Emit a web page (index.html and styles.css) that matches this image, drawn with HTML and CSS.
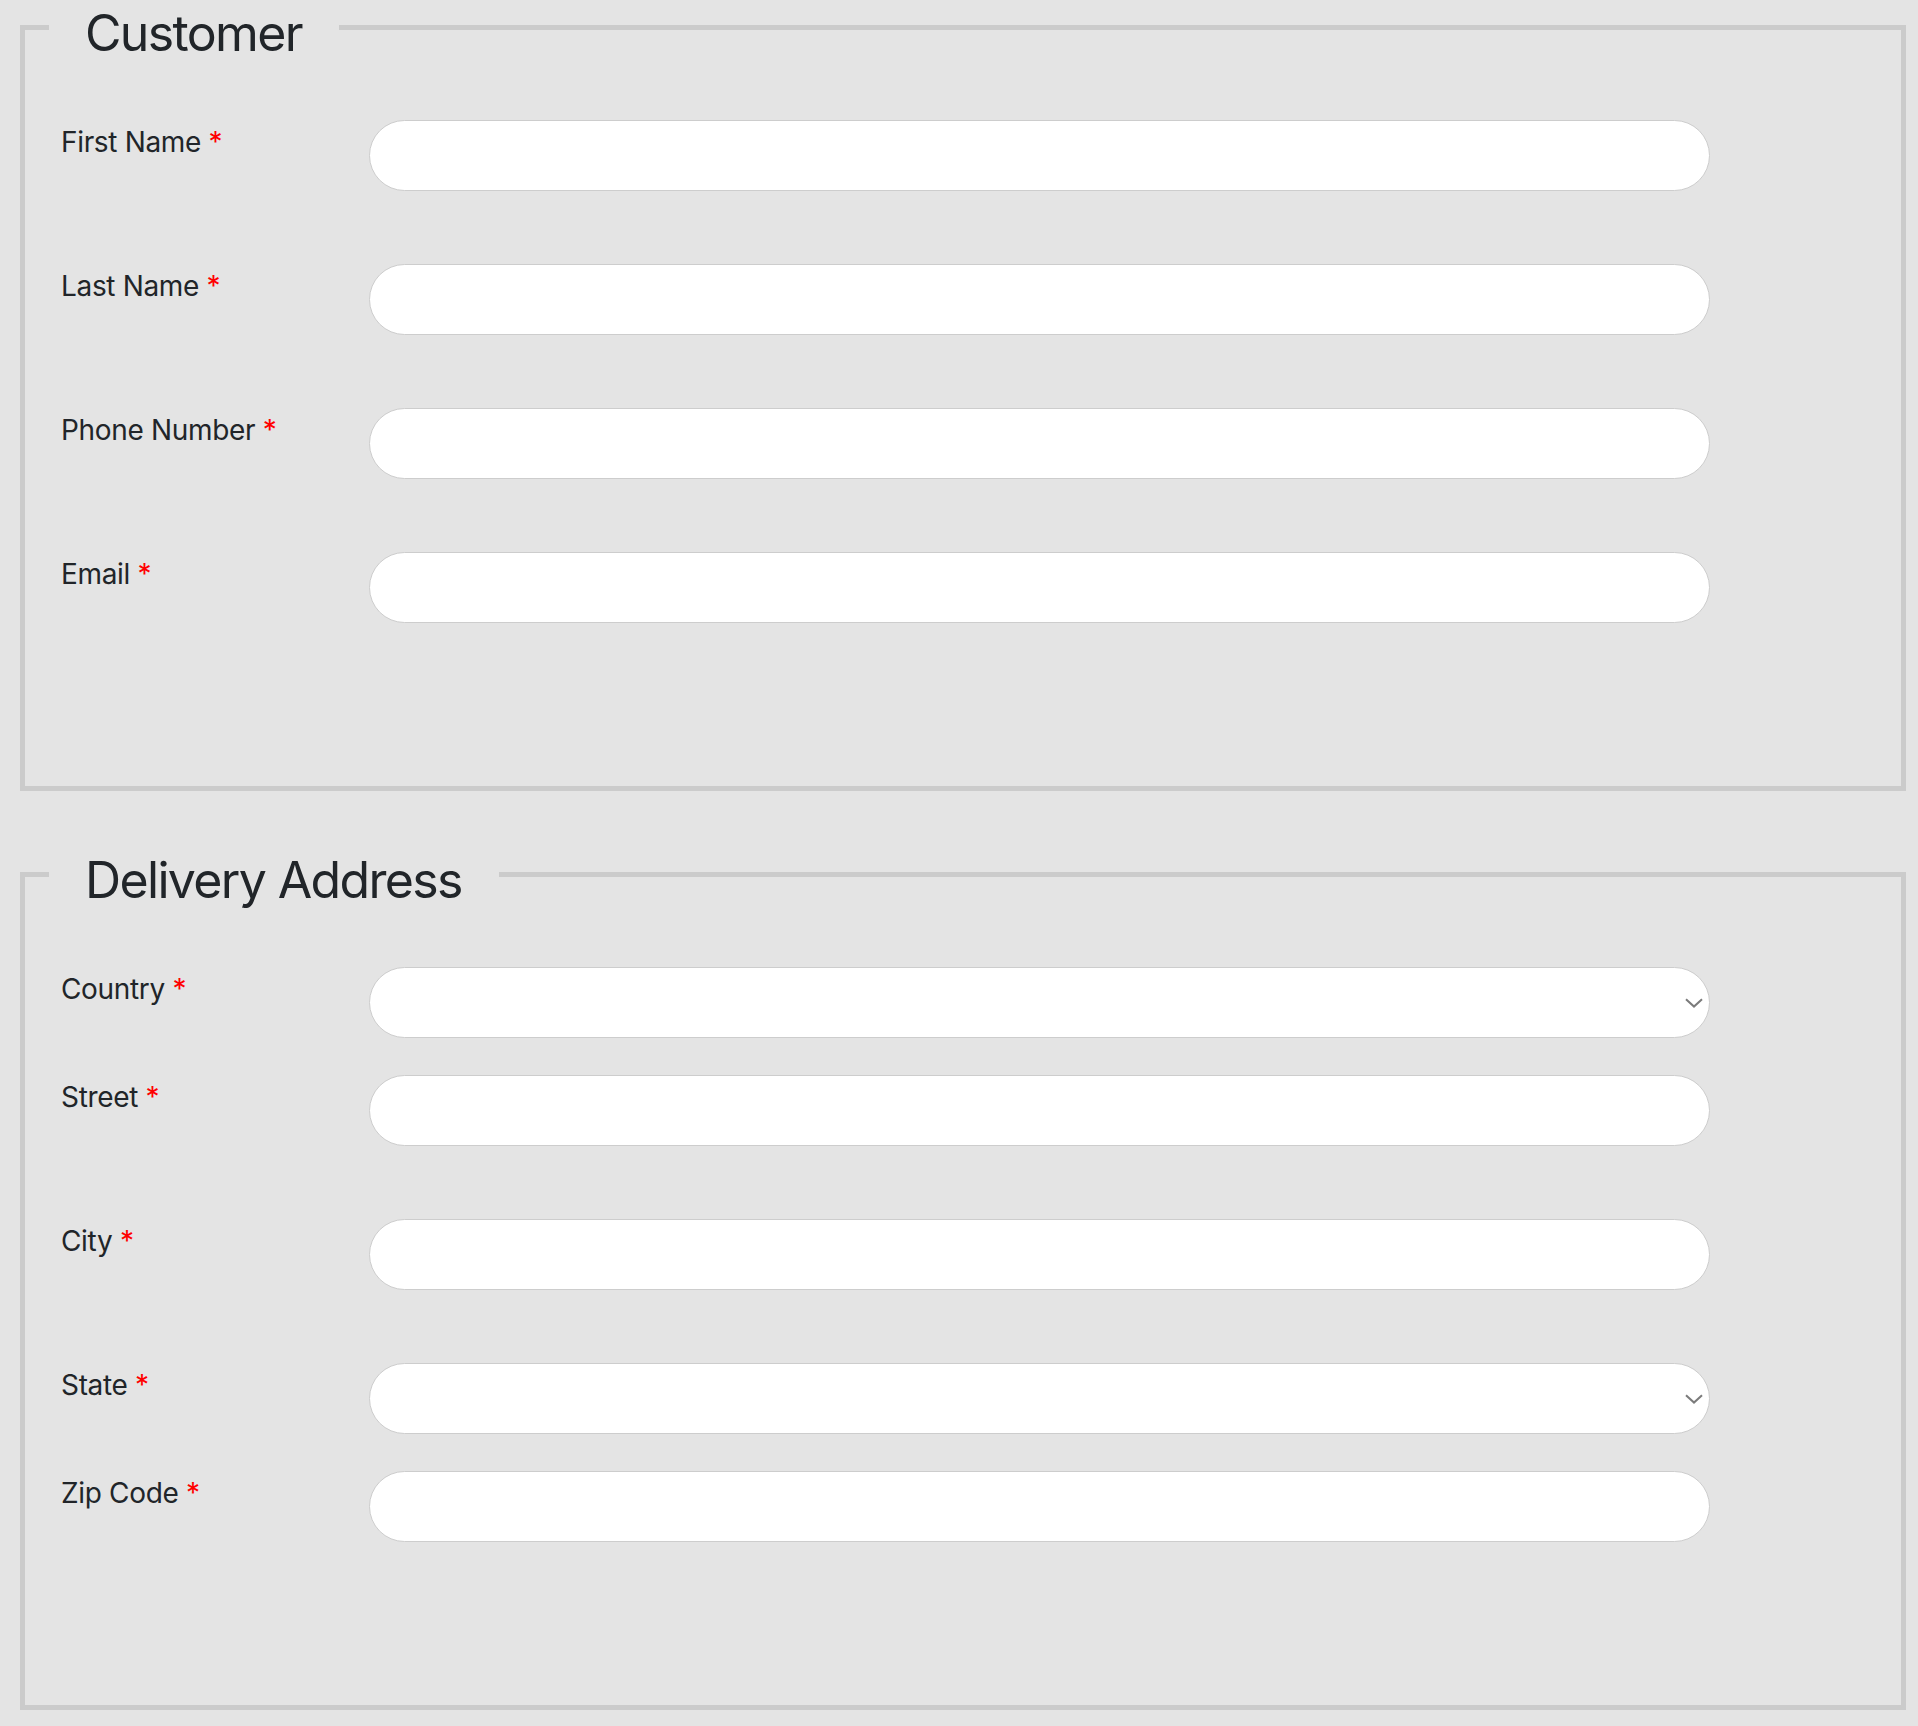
FILE: index.html
```html
<!DOCTYPE html>
<html lang="en">
<head>
<meta charset="utf-8">
<title>Order form</title>
<link rel="stylesheet" href="styles.css">
</head>
<body>
<form class="page">
  <fieldset class="group">
    <legend class="group-title">Customer</legend>
    <div class="group-body">
      <div class="row row-text">
        <label class="label" for="first">First Name <span class="req">*</span></label>
        <input class="control" id="first" type="text">
      </div>
      <div class="row row-text">
        <label class="label" for="last">Last Name <span class="req">*</span></label>
        <input class="control" id="last" type="text">
      </div>
      <div class="row row-text">
        <label class="label" for="phone">Phone Number <span class="req">*</span></label>
        <input class="control" id="phone" type="tel">
      </div>
      <div class="row row-text">
        <label class="label" for="email">Email <span class="req">*</span></label>
        <input class="control" id="email" type="email">
      </div>
    </div>
  </fieldset>

  <fieldset class="group">
    <legend class="group-title">Delivery Address</legend>
    <div class="group-body">
      <div class="row row-select">
        <label class="label" for="country">Country <span class="req">*</span></label>
        <div class="select-wrap">
          <select class="control select" id="country"><option></option></select>
          <svg class="chevron" viewBox="0 0 18 10" width="18" height="10" aria-hidden="true"><path d="M1 1.2 L9 8.6 L17 1.2" fill="none" stroke="#7b7b7b" stroke-width="2"/></svg>
        </div>
      </div>
      <div class="row row-text">
        <label class="label" for="street">Street <span class="req">*</span></label>
        <input class="control" id="street" type="text">
      </div>
      <div class="row row-text">
        <label class="label" for="city">City <span class="req">*</span></label>
        <input class="control" id="city" type="text">
      </div>
      <div class="row row-select">
        <label class="label" for="state">State <span class="req">*</span></label>
        <div class="select-wrap">
          <select class="control select" id="state"><option></option></select>
          <svg class="chevron" viewBox="0 0 18 10" width="18" height="10" aria-hidden="true"><path d="M1 1.2 L9 8.6 L17 1.2" fill="none" stroke="#7b7b7b" stroke-width="2"/></svg>
        </div>
      </div>
      <div class="row row-text">
        <label class="label" for="zip">Zip Code <span class="req">*</span></label>
        <input class="control" id="zip" type="text">
      </div>
    </div>
  </fieldset>
</form>
</body>
</html>
```
FILE: styles.css
```css
* { box-sizing: border-box; }

html, body {
  margin: 0;
  background: #e4e4e4;
}

body {
  font-family: Inter, "Noto Sans", "Liberation Sans", sans-serif;
  color: #212529;
}

.page {
  display: flex;
  flex-direction: column;
  gap: 58px;
  padding: 2px 12px 0 20px;
  margin: 0;
}

.group {
  margin: 0;
  padding: 0;
  min-width: 0;
  border: 5px solid #cbcbcb;
}

.group-title {
  margin-left: 24px;
  padding: 11px 37px 0 36px;
  font-size: 50px;
  line-height: 40px;
  font-weight: 400;
  letter-spacing: -0.033em;
  color: #212529;
}

.group-body {
  padding: 67px 191px 90px 36px;
}

.row {
  display: grid;
  grid-template-columns: 308px 1fr;
  align-items: start;
}

.row-text { margin-bottom: 73px; }
.row-select { margin-bottom: 37px; }

.label {
  font-size: 28px;
  line-height: 44px;
  letter-spacing: -0.012em;
  color: #212529;
}

.req { color: #ff0000; }

.control {
  display: block;
  width: 100%;
  height: 71px;
  margin: 0;
  padding: 0 32px;
  border: 1px solid #cdcdcd;
  border-radius: 36px;
  background: #ffffff;
  font: inherit;
  font-size: 28px;
  outline: none;
}

.select-wrap {
  position: relative;
}

.select {
  appearance: none;
  -webkit-appearance: none;
}

.chevron {
  position: absolute;
  right: 7px;
  top: 31px;
  pointer-events: none;
}
```
